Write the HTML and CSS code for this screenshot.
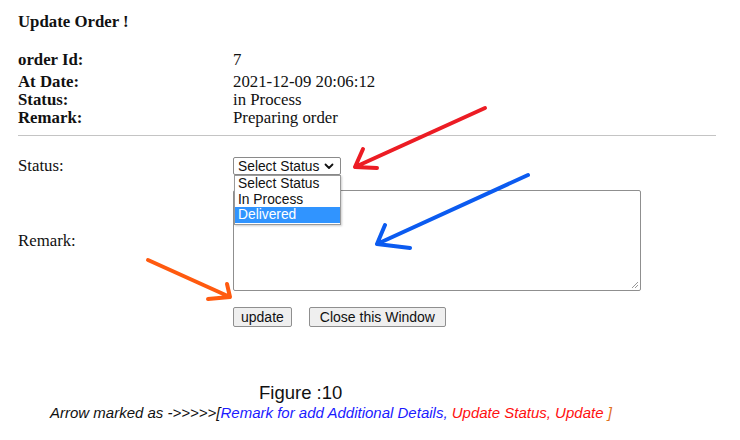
FILE: index.html
```html
<!DOCTYPE html>
<html>
<head>
<meta charset="utf-8">
<link rel="stylesheet" href="styles.css">
</head>
<body>
<div class="page">
  <h1 class="title">Update Order !</h1>
  <div class="info">
    <div class="k">order Id:</div><div class="v">7</div>
    <div class="k gap">At Date:</div><div class="v gap">2021-12-09 20:06:12</div>
    <div class="k">Status:</div><div class="v">in Process</div>
    <div class="k">Remark:</div><div class="v">Preparing order</div>
  </div>
  <div class="rule"></div>
  <div class="form">
    <div class="lbl">Status:</div>
    <div class="ctl">
      <div class="select">
        <span>Select Status</span>
        <svg class="chev" width="10" height="7" viewBox="0 0 10 7"><path d="M1.5 1.5 L5 5 L8.5 1.5" fill="none" stroke="#111" stroke-width="1.8" stroke-linecap="round" stroke-linejoin="round"/></svg>
        <div class="list">
          <div class="opt">Select Status</div>
          <div class="opt">In Process</div>
          <div class="opt sel">Delivered</div>
        </div>
      </div>
    </div>
    <div class="lbl row2">Remark:</div>
    <div class="ctl row2">
      <div class="textarea">
        <svg class="grip" width="10" height="10" viewBox="0 0 10 10"><path d="M9 3 L3 9 M9 6 L6 9" stroke="#999" stroke-width="1"/></svg>
      </div>
    </div>
    <div class="lbl row3"></div>
    <div class="ctl row3 btns">
      <div class="btn">update</div>
      <div class="btn wide">Close this Window</div>
    </div>
  </div>
  <div class="figure">Figure :10</div>
  <div class="caption">Arrow marked as -&gt;&gt;&gt;&gt;&gt;[<span class="blue">Remark for add Additional Details, </span><span class="red">Update Status, Update </span><span class="orange">]</span></div>
</div>
<svg class="arrows" width="740" height="440" viewBox="0 0 740 440">
  <g fill="none" stroke-width="4" stroke-linecap="round" stroke-linejoin="round">
    <path d="M485 108 L355 167 M363 149 L355 167 L377 168" stroke="#ec1c24"/>
    <path d="M528 175 L377 244 M385 225 L377 244 L410 248" stroke="#0b5bf0"/>
    <path d="M148 260 L230 297 M227 284 L230 297 L208 299" stroke="#ff5a0f"/>
  </g>
</svg>
</body>
</html>
```
FILE: styles.css
```css
html, body {
  margin: 0;
  padding: 0;
  background: #fff;
}
body {
  width: 740px;
  height: 440px;
  position: relative;
  overflow: hidden;
  font-family: "Liberation Serif", "Times New Roman", serif;
  font-size: 16.8px;
  color: #111;
}
.page {
  padding: 13px 24px 0 18px;
}
.title {
  margin: 0;
  font-size: 16.8px;
  line-height: 18px;
  font-weight: bold;
}
.info {
  margin-top: 20px;
  display: grid;
  grid-template-columns: 215px auto;
  line-height: 18px;
}
.info .k {
  font-weight: bold;
}
.info .gap {
  margin-top: 4px;
}
.rule {
  margin-top: 8px;
  height: 1px;
  background: #c4c4c4;
}
.form {
  margin-top: 21px;
  display: grid;
  grid-template-columns: 215px auto;
  align-items: center;
}
.lbl {
  line-height: 18px;
}
.row2 {
  margin-top: 15px;
}
.row3 {
  margin-top: 16px;
}
.select {
  position: relative;
  box-sizing: border-box;
  width: 108px;
  height: 18px;
  border: 1px solid #8a8a8a;
  border-radius: 2px;
  display: flex;
  align-items: center;
  padding-left: 4px;
  font-family: "Liberation Sans", Arial, sans-serif;
  font-size: 13.8px;
  color: #111;
}
.chev {
  margin-left: 5px;
}
.list {
  position: absolute;
  top: 17px;
  left: 0;
  width: 107px;
  box-sizing: border-box;
  border: 1px solid #9a9a9a;
  background: #fff;
  padding-bottom: 1px;
  box-shadow: 1px 1px 2px rgba(0,0,0,0.2);
  z-index: 2;
}
.opt {
  height: 15.5px;
  line-height: 15.5px;
  padding-left: 3px;
}
.opt.sel {
  background: #3094ff;
  color: #fff;
}
.textarea {
  position: relative;
  box-sizing: border-box;
  width: 408px;
  height: 101px;
  border: 1px solid #8f8f8f;
  border-radius: 2px;
  background: #fff;
}
.grip {
  position: absolute;
  right: 1px;
  bottom: 1px;
}
.btns {
  display: flex;
  gap: 17px;
}
.btn {
  box-sizing: border-box;
  height: 20px;
  line-height: 18px;
  border: 1px solid #8f8f8f;
  border-radius: 2px;
  background: #efefef;
  padding: 0 7px;
  font-family: "Liberation Sans", Arial, sans-serif;
  font-size: 14px;
  color: #111;
}
.btn.wide {
  padding: 0 10px;
}
.figure {
  margin-top: 55px;
  margin-left: 241px;
  font-family: "Liberation Sans", Arial, sans-serif;
  font-size: 18.5px;
  line-height: 21px;
  color: #111;
}
.caption {
  margin-top: 1px;
  margin-left: 32px;
  font-family: "Liberation Sans", Arial, sans-serif;
  font-style: italic;
  font-size: 15px;
  line-height: 18px;
  color: #111;
}
.blue { color: #1a1aff; }
.red { color: #ff1010; }
.orange { color: #e07020; }
.arrows {
  position: absolute;
  top: 0;
  left: 0;
  pointer-events: none;
}
```
